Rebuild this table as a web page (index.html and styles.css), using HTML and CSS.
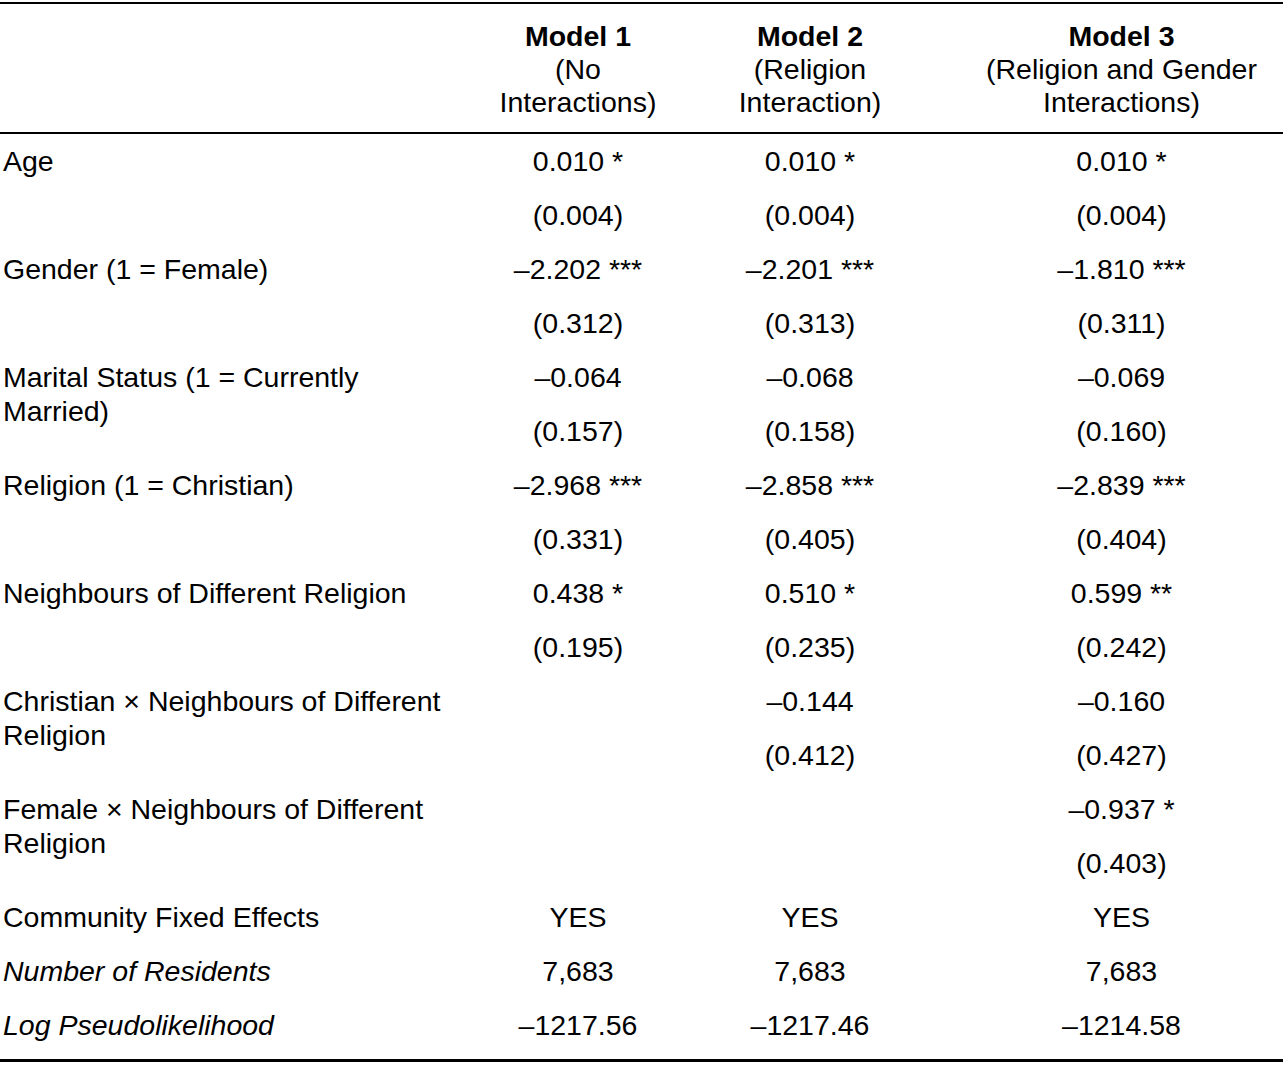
FILE: index.html
```html
<!DOCTYPE html>
<html>
<head>
<meta charset="utf-8">
<link rel="stylesheet" href="styles.css">
</head>
<body>
<table class="results">
  <colgroup>
    <col class="c-label">
    <col class="c-m1">
    <col class="c-m2">
    <col class="c-m3">
  </colgroup>
  <thead>
    <tr>
      <th class="label"></th>
      <th class="m1"><span class="model">Model 1</span><br>(No<br>Interactions)</th>
      <th class="m2"><span class="model">Model 2</span><br>(Religion<br>Interaction)</th>
      <th class="m3"><span class="model">Model 3</span><br>(Religion and Gender<br>Interactions)</th>
    </tr>
  </thead>
  <tbody>
    <tr><td class="label" rowspan="2">Age</td><td>0.010 *</td><td>0.010 *</td><td class="m3">0.010 *</td></tr>
    <tr><td>(0.004)</td><td>(0.004)</td><td class="m3">(0.004)</td></tr>

    <tr><td class="label" rowspan="2">Gender (1 = Female)</td><td>–2.202 ***</td><td>–2.201 ***</td><td class="m3">–1.810 ***</td></tr>
    <tr><td>(0.312)</td><td>(0.313)</td><td class="m3">(0.311)</td></tr>

    <tr><td class="label" rowspan="2">Marital Status (1 = Currently Married)</td><td>–0.064</td><td>–0.068</td><td class="m3">–0.069</td></tr>
    <tr><td>(0.157)</td><td>(0.158)</td><td class="m3">(0.160)</td></tr>

    <tr><td class="label" rowspan="2">Religion (1 = Christian)</td><td>–2.968 ***</td><td>–2.858 ***</td><td class="m3">–2.839 ***</td></tr>
    <tr><td>(0.331)</td><td>(0.405)</td><td class="m3">(0.404)</td></tr>

    <tr><td class="label" rowspan="2">Neighbours of Different Religion</td><td>0.438 *</td><td>0.510 *</td><td class="m3">0.599 **</td></tr>
    <tr><td>(0.195)</td><td>(0.235)</td><td class="m3">(0.242)</td></tr>

    <tr><td class="label" rowspan="2">Christian × Neighbours of Different Religion</td><td></td><td>–0.144</td><td class="m3">–0.160</td></tr>
    <tr><td></td><td>(0.412)</td><td class="m3">(0.427)</td></tr>

    <tr><td class="label" rowspan="2">Female × Neighbours of Different Religion</td><td></td><td></td><td class="m3">–0.937 *</td></tr>
    <tr><td></td><td></td><td class="m3">(0.403)</td></tr>

    <tr><td class="label">Community Fixed Effects</td><td>YES</td><td>YES</td><td class="m3">YES</td></tr>
    <tr><td class="label italic">Number of Residents</td><td>7,683</td><td>7,683</td><td class="m3">7,683</td></tr>
    <tr class="last"><td class="label italic">Log Pseudolikelihood</td><td>–1217.56</td><td>–1217.46</td><td class="m3">–1214.58</td></tr>
  </tbody>
</table>
</body>
</html>
```

FILE: styles.css
```css
html, body {
  margin: 0;
  padding: 0;
  background: #ffffff;
}

body {
  font-family: "Liberation Sans", Arial, sans-serif;
  font-size: 28.5px;
  color: #000000;
}

.results {
  margin-top: 2px;
  width: 1283px;
  table-layout: fixed;
  border-collapse: separate;
  border-spacing: 0;
}

.c-label { width: 462px; }
.c-m1 { width: 232px; }
.c-m2 { width: 232px; }
.c-m3 { width: 357px; }

.results th {
  font-weight: normal;
  line-height: 33px;
  padding: 16px 0 13px 0;
  text-align: center;
  vertical-align: top;
  border-top: 2px solid #000;
  border-bottom: 2px solid #000;
}

.results th .model {
  font-weight: bold;
}

.results td {
  line-height: 34px;
  padding: 10px 0 10px 0;
  text-align: center;
  vertical-align: top;
  white-space: nowrap;
}

.results .m3 {
  padding-left: 34px;
}

.results td.label {
  text-align: left;
  padding-left: 3px;
  padding-right: 8px;
  white-space: normal;
}

.results td.italic {
  font-style: italic;
}

.results tr.last td {
  padding-bottom: 17px;
  border-bottom: 3px solid #000;
}
```
